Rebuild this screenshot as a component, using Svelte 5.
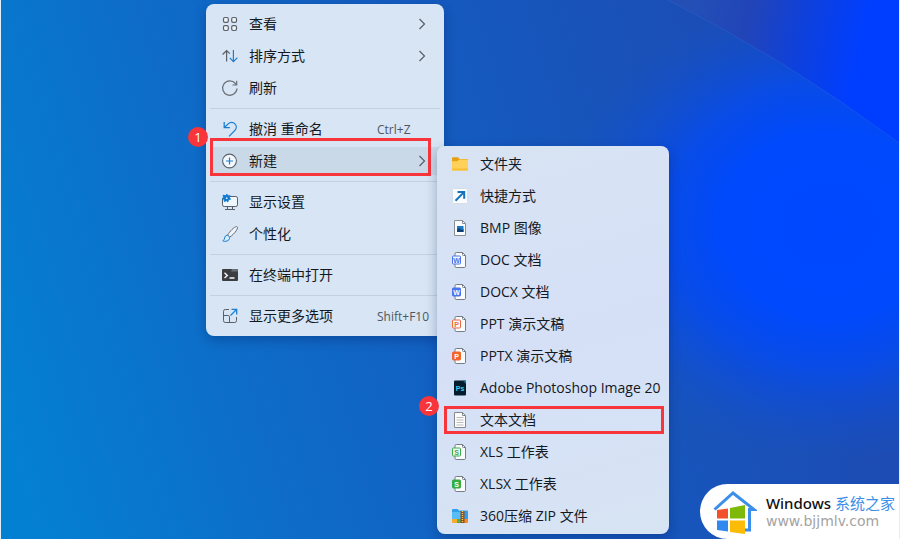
<script lang="ts">
  type Item = {
    icon: string;
    label: string;
    shortcut?: string;
    submenu?: boolean;
    step?: number;
  };

  const groups: Item[][] = [
    [
      { icon: "view", label: "查看", submenu: true },
      { icon: "sort", label: "排序方式", submenu: true },
      { icon: "refresh", label: "刷新" },
    ],
    [
      { icon: "undo", label: "撤消 重命名", shortcut: "Ctrl+Z" },
      { icon: "new", label: "新建", submenu: true, step: 1 },
    ],
    [
      { icon: "display", label: "显示设置" },
      { icon: "brush", label: "个性化" },
    ],
    [{ icon: "terminal", label: "在终端中打开" }],
    [{ icon: "more", label: "显示更多选项", shortcut: "Shift+F10" }],
  ];

  const newItems: Item[] = [
    { icon: "folder", label: "文件夹" },
    { icon: "shortcut", label: "快捷方式" },
    { icon: "bmp", label: "BMP 图像" },
    { icon: "doc", label: "DOC 文档" },
    { icon: "docx", label: "DOCX 文档" },
    { icon: "ppt", label: "PPT 演示文稿" },
    { icon: "pptx", label: "PPTX 演示文稿" },
    { icon: "ps", label: "Adobe Photoshop Image 20" },
    { icon: "txt", label: "文本文档", step: 2 },
    { icon: "xls", label: "XLS 工作表" },
    { icon: "xlsx", label: "XLSX 工作表" },
    { icon: "zip", label: "360压缩 ZIP 文件" },
  ];

  // office-like documents: letter, colour, filled badge
  const docs: Record<string, [string, string, boolean]> = {
    doc: ["W", "#4a74ee", false],
    docx: ["W", "#4a74ee", true],
    ppt: ["P", "#ee6a3c", false],
    pptx: ["P", "#f3642b", true],
    xls: ["S", "#3dae49", false],
    xlsx: ["S", "#35ad43", true],
  };
</script>

{#snippet icon(name: string)}
  <svg class="icon" viewBox="0 0 16 16" fill="none" aria-hidden="true">
    {#if name === "view"}
      <g stroke="#5b6068" stroke-width="1.2" fill="#edf4fa">
        <rect x="1.5" y="1.5" width="4.8" height="4.8" rx="1.4" />
        <rect x="9.7" y="1.5" width="4.8" height="4.8" rx="1.4" />
        <rect x="1.5" y="9.7" width="4.8" height="4.8" rx="1.4" />
        <rect x="9.7" y="9.7" width="4.8" height="4.8" rx="1.4" />
      </g>
    {:else if name === "sort"}
      <path d="M4.6 13.5V2.5M.6 6.5l4-4 3.2 3.2" stroke="#5b6068" stroke-width="1.2" />
      <path d="M11.4 2v11.5M7.8 9.9l3.6 3.7 4-4" stroke="#1b7fd0" stroke-width="1.2" />
    {:else if name === "refresh"}
      <path d="M15 8.5a7.2 7.2 0 1 1-1.6-5L14.5 5M14.7.8V5h-4.2" stroke="#6a6f77" stroke-width="1.2" />
    {:else if name === "undo"}
      <path d="M2.2 1v5.7h5.7M2.4 6.5l3.8-3.6c2.1-2 5-1.8 6.7 0 1.8 1.8 1.8 4.6 0 6.5L7 15.4" stroke="#1b7fd0" stroke-width="1.3" />
    {:else if name === "new"}
      <circle cx="7.5" cy="8" r="6.9" fill="#f2f8fd" stroke="#5b6068" stroke-width="1.1" />
      <path d="M7.5 4.5v7M4 8h7" stroke="#1b7fd0" stroke-width="1.2" />
    {:else if name === "display"}
      <path d="M5.5 2.5h8.3a1.7 1.7 0 0 1 1.7 1.7v6.6a1.7 1.7 0 0 1-1.7 1.7H2.2A1.7 1.7 0 0 1 .5 10.8V5z" fill="#f0f7fc" stroke="#5b6068" />
      <path d="M5.5 12.5v2.8M10.5 12.5v2.8M3 15.5h10" stroke="#5b6068" />
      <path d="M5 .2l1.2 1.7 2-.2-.8 1.9L8.6 5.2l-2 .3L5.800 8 4.400 6.700 2.200 7.500l.1-2.100L.1 4.600l1.600-1.400L1 1.200l2.300.5z" fill="#0d79d2" stroke="#0d79d2" stroke-width=".9" />
      <circle cx="4.7" cy="4.2" r=".9" fill="#d8ecfa" />
    {:else if name === "brush"}
      <path d="M5.5 9.2C8 5.2 12 .8 14.5.6c1.800 0 .9 2.300-.2 4C12.400 7.300 10 9.800 7.400 11.300z" fill="#eef4fa" stroke="#666b73" />
      <path d="M5.4 9.3c-2.200 0-2.500 1.400-2.700 2.700C2.500 13.500 1.600 14.300.8 14.900c2.600 1 6.200.3 6.700-2.400.2-1.800-.8-3-2.100-3.200z" fill="#d9edfc" stroke="#1b7fd0" />
    {:else if name === "terminal"}
      <path d="M0 3a1 1 0 0 1 1-1h14a1 1 0 0 1 1 1v10a1 1 0 0 1-1 1H1a1 1 0 0 1-1-1z" fill="#3b3d40" />
      <path d="M10 2h5a1 1 0 0 1 1 1v1.5H9z" fill="#6a6e72" />
      <path d="M2.5 5.8L5.3 8.4 2.5 11M7.5 11h5" stroke="#f5f7f8" stroke-width="1.4" />
    {:else if name === "more"}
      <path d="M7 1.5H3.3a1.8 1.8 0 0 0-1.8 1.8v9.4a1.8 1.8 0 0 0 1.8 1.8h9.4a1.8 1.8 0 0 0 1.8-1.8V9M1.5 7.5h4.7a1.3 1.3 0 0 1 1.3 1.3v5.7" stroke="#5b6068" />
      <path d="M8.5 7.5l6-6M9.5 1.3h5.2v5.2" stroke="#1b7fd0" stroke-width="1.3" />
    {:else if name === "folder"}
      <path d="M0 2.2a1 1 0 0 1 1-1h5l1.6 1.7H15a1 1 0 0 1 1 1V8H0z" fill="#e5a112" />
      <path d="M0 5.2h5.5l1.7-1.6H15a1 1 0 0 1 1 1v8.9a1 1 0 0 1-1 1H1a1 1 0 0 1-1-1z" fill="#ffd158" />
      <path d="M0 12.5v1a1 1 0 0 0 1 1h14a1 1 0 0 0 1-1v-1z" fill="#f7bd35" />
    {:else if name === "shortcut"}
      <rect x=".5" y=".5" width="15" height="15" rx="1" fill="#fafdff" stroke="#d6dde4" />
      <path d="M3.5 12.7l7.5-7.6M5.5 4h6.7v6.7" stroke="#1472bf" stroke-width="2" />
    {:else if name === "bmp"}
      <path d="M2.5.5h8l3 3v12h-11z" fill="#fafcfe" stroke="#8b8f94" />
      <path d="M10.5.5v3h3" stroke="#8b8f94" />
      <rect x="5" y="6" width="6.5" height="6" fill="#1a78c6" />
      <path d="M5 12V9.5l2-1.5 2.5 2 2-1v3z" fill="#0c3f78" />
    {:else if docs[name]}
      {@const [letter, color, filled] = docs[name]}
      <path d="M3 3V1.7A1.2 1.2 0 0 1 4.2.5h6.3l3 3v10.8a1.2 1.2 0 0 1-1.2 1.2H4.2A1.2 1.2 0 0 1 3 14.3V13z" fill="#fafcfe" stroke="#777c83" />
      <path d="M10.5.5v2a1 1 0 0 0 1 1h2" stroke="#777c83" />
      <rect x=".5" y="4" width="8" height="8" rx=".8" fill={filled ? color : "#f1f6fd"} stroke={color} />
      <text x="4.5" y="10.5" class="letter" fill={filled ? "#fff" : color}>{letter}</text>
    {:else if name === "ps"}
      <rect x="2" y=".5" width="12" height="15" rx="1" fill="#031d2f" />
      <path d="M10.5.5H13a1 1 0 0 1 1 1v2.5z" fill="#1a6d87" />
      <text x="8" y="10.5" class="letter" fill="#3fd0ee">Ps</text>
    {:else if name === "txt"}
      <path d="M2.5.5h8l3 3v12h-11z" fill="#fdfdfb" stroke="#85898e" />
      <path d="M10.5.5v3h3" stroke="#85898e" />
      <path d="M4.5 5.5h7M4.5 8h7M4.5 10.5h7M4.5 13h7" stroke="#b9bbbc" />
    {:else if name === "zip"}
      <path d="M0 2a1 1 0 0 1 1-1h4.500L7 2.500h8a1 1 0 0 1 1 1V11H0z" fill="#2fa0ee" />
      <path d="M0 4h9v7H0z" fill="#56bdf8" />
      <path d="M0 11h5v4H1a1 1 0 0 1-1-1z" fill="#f6ad2e" />
      <path d="M5 11h5v4H5z" fill="#59ad4e" />
      <path d="M10 11h6v3a1 1 0 0 1-1 1h-5z" fill="#f08a2c" />
      <path d="M8.5 3h4v12h-4z" fill="#8c4a20" />
      <path d="M10.5 3v12" stroke="#f9ce55" stroke-dasharray="1 1" stroke-width="1.5" />
    {/if}
  </svg>
{/snippet}

{#snippet row(item: Item)}
  <li class="row" role="none">
    <button role="menuitem" class={{ active: item.step === 1 }}>
      {@render icon(item.icon)}
      <span class="label">{item.label}</span>
      {#if item.shortcut}
        <kbd>{item.shortcut}</kbd>
      {:else if item.submenu}
        <svg class="chevron" viewBox="0 0 8 12" fill="none" aria-hidden="true">
          <path d="M1.500 1l5 5-5 5" stroke="#5b6068" stroke-width="1.2" />
        </svg>
      {/if}
    </button>
    {#if item.step}
      <span class="frame"></span>
      <span class="step">{item.step}</span>
    {/if}
  </li>
{/snippet}

<main class="desktop">
  <svg class="wallpaper" viewBox="0 0 900 539" preserveAspectRatio="none" aria-hidden="true">
    <defs>
      <linearGradient id="base" gradientUnits="userSpaceOnUse" x1="0" y1="420" x2="800" y2="180">
        <stop offset="0" stop-color="#0480d2" />
        <stop offset=".3" stop-color="#0e6cc8" />
        <stop offset=".7" stop-color="#1657bd" />
        <stop offset="1" stop-color="#1c4cb4" />
      </linearGradient>
      <linearGradient id="petal" gradientUnits="userSpaceOnUse" x1="690" y1="10" x2="860" y2="50">
        <stop offset="0" stop-color="#2450b6" />
        <stop offset=".35" stop-color="#2144b8" />
        <stop offset=".7" stop-color="#0c40e0" />
        <stop offset="1" stop-color="#003eff" />
      </linearGradient>
      <radialGradient id="glow">
        <stop offset="0" stop-color="#0048ff" />
        <stop offset=".4" stop-color="#0049fc" />
        <stop offset=".6" stop-color="#054bf0" stop-opacity=".85" />
        <stop offset=".8" stop-color="#0c4ede" stop-opacity=".45" />
        <stop offset="1" stop-color="#1450cc" stop-opacity="0" />
      </radialGradient>
    </defs>
    <rect width="900" height="539" fill="url(#base)" />
    <ellipse cx="830" cy="225" rx="270" ry="235" fill="url(#glow)" />
    <path d="M668 0Q787 59 900 143V0z" fill="url(#petal)" />
    <path d="M668 0Q787 59 900 143" fill="none" stroke="#3a70e0" stroke-opacity=".3" />
  </svg>

  <ul class="menu context" role="menu" aria-label="桌面">
    {#each groups as group, i}
      {#if i > 0}
        <li class="separator" role="separator"></li>
      {/if}
      {#each group as item}
        {@render row(item)}
      {/each}
    {/each}
  </ul>

  <ul class="menu new" role="menu" aria-label="新建">
    {#each newItems as item}
      {@render row(item)}
    {/each}
  </ul>

  <a class="brand" href="http://www.bjjmlv.com">
    <svg class="logo" viewBox="0 0 44 44" aria-hidden="true">
      <path d="M1.5 19.5L20 3l21 16.5h-4.500V40H32" fill="none" stroke="#3b8eea" stroke-width="3" />
      <path d="M4 20l11-1.5v10H4z" fill="#f1512b" />
      <path d="M17 18l15-3v13.5H17z" fill="#7dba08" />
      <path d="M4 30.5h11v11L4 40z" fill="#3189f0" />
      <path d="M17 30.5h15V44l-15-2z" fill="#fbbb06" />
    </svg>
    <span class="brand-text">
      <span class="name">Windows <em>系统之家</em></span>
      <span class="site">www.bjjmlv.com</span>
    </span>
  </a>
</main>

<style>
  :global(body) {
    margin: 0;
  }

  .desktop {
    position: relative;
    box-sizing: border-box;
    min-height: 100vh;
    overflow: hidden;
    border: solid #e4eef8;
    border-width: 0 1px;
    font-family: "Open Sans", "Noto Sans CJK SC", sans-serif;
    font-size: 14px;
    color: #14181f;
  }

  .wallpaper {
    position: absolute;
    inset: 0;
    width: 100%;
    height: 100%;
  }

  .menu {
    position: absolute;
    box-sizing: border-box;
    margin: 0;
    list-style: none;
    border-radius: 8px;
    box-shadow: 0 4px 12px rgba(0, 20, 80, 0.3);
  }

  .context {
    left: 205px;
    top: 4px;
    width: 238px;
    padding: 4px 0;
    background: #d7e5f4;
  }

  .new {
    left: 436px;
    top: 146px;
    width: 232px;
    padding: 2px 0;
    background: linear-gradient(165deg, #d8e4f3, #d5e0f7 50%, #d7e4f3);
  }

  .row {
    position: relative;
  }

  button {
    display: grid;
    align-items: center;
    width: 100%;
    height: 32px;
    border: 0;
    background: none;
    font: inherit;
    color: inherit;
    text-align: left;
    white-space: nowrap;
  }

  .context button {
    grid-template-columns: 16px 1fr 49px;
    column-gap: 11px;
    padding: 0 18px 0 16px;
  }

  .new button {
    grid-template-columns: 16px 1fr;
    column-gap: 12px;
    padding: 0 0 0 15px;
  }

  .active {
    background: linear-gradient(#cad9e7, #cad9e7) center / calc(100% - 8px) 28px no-repeat;
  }

  .icon {
    width: 16px;
    height: 16px;
    overflow: visible;
  }

  .letter {
    font: bold 7px "Liberation Sans", sans-serif;
    text-anchor: middle;
  }

  .label {
    line-height: 20px;
  }

  kbd {
    font-family: "Open Sans", sans-serif;
    font-size: 12px;
    color: #50565e;
  }

  .chevron {
    justify-self: end;
    width: 8px;
    height: 12px;
  }

  .separator {
    height: 1px;
    margin: 4px;
    background: #c3d2e1;
  }

  .frame {
    position: absolute;
    box-sizing: border-box;
    border: 3px solid #f8353a;
    pointer-events: none;
  }

  .context .frame {
    inset: -7px 13px 1px 4px;
  }

  .new .frame {
    inset: 2px 5px 2px 7px;
  }

  .step {
    position: absolute;
    top: -18px;
    left: -18px;
    width: 20px;
    height: 20px;
    border-radius: 50%;
    background: #f8353a;
    color: #fff;
    font-size: 13px;
    line-height: 20px;
    text-align: center;
  }

  .new .step {
    top: -8px;
  }

  .brand {
    position: absolute;
    right: 0;
    bottom: 0;
    display: flex;
    align-items: center;
    gap: 9px;
    box-sizing: border-box;
    height: 55px;
    padding: 0 4px 0 13px;
    border-radius: 28px 0 0 28px;
    background: #fff;
    text-decoration: none;
  }

  .logo {
    width: 44px;
    height: 44px;
  }

  .brand-text {
    display: flex;
    flex-direction: column;
  }

  .name {
    font-family: "Noto Sans", "Noto Sans CJK SC", sans-serif;
    font-size: 15px;
    font-weight: 500;
    line-height: 19px;
    color: #111;
  }

  em {
    font-style: normal;
    font-weight: 400;
    color: #3b8eea;
  }

  .site {
    font-family: "DejaVu Sans", sans-serif;
    font-size: 14px;
    line-height: 17px;
    color: #a3a3a3;
  }
</style>
